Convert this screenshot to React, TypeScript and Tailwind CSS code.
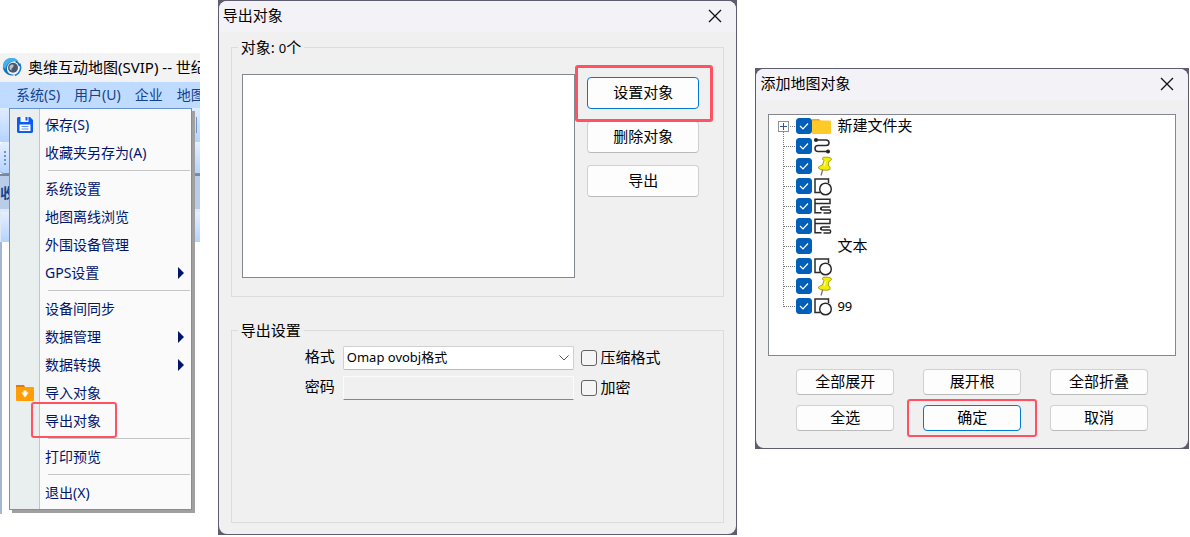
import React from "react";

const uiFont = "font-['Noto_Sans','Noto_Sans_CJK_SC',sans-serif]";

interface MenuEntry {
  label?: string;
  icon?: "save" | "import";
  submenu?: boolean;
  marked?: boolean;
}

// An entry without a label is a separator
const menuEntries: MenuEntry[] = [
  { label: "保存(S)", icon: "save" },
  { label: "收藏夹另存为(A)" },
  {},
  { label: "系统设置" },
  { label: "地图离线浏览" },
  { label: "外围设备管理" },
  { label: "GPS设置", submenu: true },
  {},
  { label: "设备间同步" },
  { label: "数据管理", submenu: true },
  { label: "数据转换", submenu: true },
  { label: "导入对象", icon: "import" },
  { label: "导出对象", marked: true },
  {},
  { label: "打印预览" },
  {},
  { label: "退出(X)" },
];

type NodeIcon = "folder" | "track" | "pin" | "shape" | "layer" | "none";

const treeNodes: { icon: NodeIcon; label: string }[] = [
  { icon: "folder", label: "新建文件夹" },
  { icon: "track", label: "" },
  { icon: "pin", label: "" },
  { icon: "shape", label: "" },
  { icon: "layer", label: "" },
  { icon: "layer", label: "" },
  { icon: "none", label: "文本" },
  { icon: "shape", label: "" },
  { icon: "pin", label: "" },
  { icon: "shape", label: "99" },
];

function Logo() {
  return (
    <svg viewBox="0 0 20 20" className="h-5 w-5 shrink-0" fill="none">
      <path d="M1 10A9 8.500 0 0 1 16.500 3.500C11 1.500 5.500 5 5 10S9 17.500 14 16.500A9 8.800 0 0 1 1 10Z" fill="#1373c4" />
      <path d="M1 9A8.500 8.500 0 0 1 16.500 3.500C10 1.500 4.500 5 3.500 11Z" fill="#43b1ea" />
      <circle cx="11" cy="9.800" r="5" fill="#4a5a6c" />
      <path d="M7.500 8.500C9 6 12 6 11.500 8S9 10 9.500 12.500C8 12 7 10.500 7.500 8.500Z" fill="#b4c4d0" />
      <path d="M17.500 5.500C20 10 18 15.500 13 17.500" stroke="#1880cf" strokeWidth="1.600" />
      <path d="M13.500 3.500C15.500 4 17 5.500 17.500 8" stroke="#1c5f9c" strokeWidth="1.300" />
    </svg>
  );
}

function SaveIcon() {
  return (
    <svg viewBox="0 0 16 16" className="h-4 w-4">
      <path d="M1 0H13L16 3V15L15 16H1L0 15V1Z" fill="#0d5bf0" />
      <path d="M3.500 0H11.500V5H3.500Z" fill="#f4f7fb" />
      <path d="M8.500 0H10.500V3.500H8.500Z" fill="#0d5bf0" />
      <path d="M2.500 7.500H13.500V14H2.500Z" fill="#fff" />
      <path d="M4.500 9.500H11.500M4.500 12H11.500" stroke="#5d94f5" />
    </svg>
  );
}

function ImportIcon() {
  return (
    <svg viewBox="0 0 18 16" className="h-4 w-[18px]">
      <path d="M0 0H8L9 2H17V5H0Z" fill="#e8780c" />
      <rect y="2" width="18" height="14" rx="1" fill="#ff9f05" />
      <path d="M7.500 5.500H10.500V7.500H12.500L9 12.500L5.500 7.500H7.500Z" fill="#fff" />
    </svg>
  );
}

function TreeIcon({ icon }: { icon: NodeIcon }) {
  return (
    <svg
      viewBox="0 0 20 20"
      className="h-5 w-5 shrink-0 overflow-visible"
      fill="none"
      stroke="#2b2b2b"
      strokeWidth="1.500"
    >
      {icon === "folder" && (
        <g stroke="none">
          <path d="M0 4C0 3.300 .5 3 1 3H7L8.500 4.500V8H0Z" fill="#ff9d1c" />
          <rect y="4.500" width="19" height="13.500" rx="1" fill="#ffca28" />
        </g>
      )}
      {icon === "track" && (
        <g>
          <path d="M4 4H14C18 4 18 9.500 14 9.500H6C2 9.500 2 15.500 6 15.500H16" />
          <circle cx="4" cy="4" r="1.300" fill="#111" />
          <circle cx="16" cy="15.500" r="1.300" fill="#111" />
        </g>
      )}
      {icon === "pin" && (
        <g>
          <path d="M11 13L9 19.500" stroke="#777" strokeWidth="1.300" />
          <path
            d="M10.500 2C10.500 .5 19.500 1 19.500 3C19.500 4.500 18 5 17 5.200L16.200 9.500C18 10.500 18.500 12 18 13.200C17 14.800 7.500 14.500 6.500 12C6.300 10.500 8 9.500 10.300 9.200L12 4.600C11 4 10.300 3 10.500 2Z"
            fill="#f3ee00"
            stroke="#8d8a16"
            strokeWidth=".8"
          />
          <path d="M13.500 5L12.200 10" stroke="#fffcae" strokeWidth="1.200" />
        </g>
      )}
      {icon === "shape" && (
        <g>
          <path d="M8 16.500H3V3H16.500V7" />
          <circle cx="13.500" cy="13" r="5.800" fill="#fff" />
        </g>
      )}
      {icon === "layer" && (
        <path d="M3 17.500V3.200H18V7.500H3M3 16.800H9.500M8 13H10M18 11H11C8 11 8 14 11 14H17.500C19 14 19 17 17.500 17H11.500" />
      )}
    </svg>
  );
}

// Dotted connector in front of a tree row
function Branch({ first, last }: { first: boolean; last: boolean }) {
  return (
    <svg viewBox="0 0 19 20" className="h-5 w-[19px] shrink-0" fill="none" shapeRendering="crispEdges">
      <path
        d={last ? "M6.500 0V11" : first ? "M6.500 16V20" : "M6.500 0V20"}
        stroke="#777"
        strokeDasharray="1 1"
      />
      <path d={first ? "M13 10.500H19" : "M7 10.500H19"} stroke="#777" strokeDasharray="1 1" />
      {first && (
        <g>
          <rect x="1.500" y="5.500" width="10" height="10" stroke="#919191" fill="#fff" />
          <path d="M3 10.500H10M6.500 7V14" stroke="#2f55a4" />
        </g>
      )}
    </svg>
  );
}

function CloseButton() {
  return (
    <button type="button" aria-label="关闭" className="flex h-6 w-6 items-center justify-center">
      <svg viewBox="0 0 14 14" className="h-3.5 w-3.5" stroke="#111" strokeWidth="1.300">
        <path d="M1 1L13 13M13 1L1 13" />
      </svg>
    </button>
  );
}

// Red frame around the control to click
function Mark({ className }: { className: string }) {
  return (
    <span
      className={`pointer-events-none absolute rounded-[3px] border-2 border-[#ff5263] ${className}`}
    />
  );
}

function PushButton({
  children,
  primary = false,
  className,
}: {
  children: React.ReactNode;
  primary?: boolean;
  className: string;
}) {
  return (
    <button
      type="button"
      className={`block rounded-[4px] border bg-[#fdfdfd] pb-0.5 text-[15px] leading-5 ${
        primary ? "border-[#0078d4]" : "border-[#d0d0d0] border-b-[#bababa]"
      } ${className}`}
    >
      {children}
    </button>
  );
}

function MainWindow() {
  return (
    <section className="relative mt-[53px] h-[461px] min-w-0 text-sm">
      <div className="flex h-full flex-col overflow-hidden whitespace-nowrap">
        <header className="flex h-[29px] shrink-0 items-center gap-1.5 bg-[#f3f3f3] pl-0.5 text-[15px] text-black">
          <Logo />
          <span>奥维互动地图(SVIP) -- 世纪</span>
        </header>
        <nav className="flex h-[26px] shrink-0 items-center gap-3.5 bg-[#bfdbff] pl-4 text-[#15428b]">
          <button type="button" className="shrink-0">系统(S)</button>
          <button type="button" className="shrink-0">用户(U)</button>
          <button type="button" className="shrink-0">企业</button>
          <button type="button" className="shrink-0">地图</button>
        </nav>
        <div className="flex h-[34px] shrink-0 items-center justify-end bg-linear-to-b from-[#e0ecff] to-[#b5d3ff] pr-[3px]">
          <span className="h-4 border-l border-[#6f94cc]" />
        </div>
        <div className="flex h-8 shrink-0 items-center rounded-l border-b border-[#6f94cc] bg-linear-to-b from-[#e5efff] to-[#b5d3ff] pl-1">
          <span className="h-3.5 border-l-2 border-dotted border-[#6f94cc]" />
        </div>
        <div className="flex h-[35px] shrink-0 items-center border-t-2 border-[#7d8794] bg-[#b9cde8] font-bold text-[#15428b]">
          收藏夹
        </div>
        <div className="h-[33px] shrink-0 border-l border-t-3 border-[#dfe8f6] bg-linear-to-b from-[#e5efff] to-[#b5d3ff]" />
        <div className="flex-1 border-l-2 border-[#a3b7d3] bg-white" />
      </div>

      <ul
        role="menu"
        className="absolute left-[9px] right-2 top-[55px] border border-[#6593cf] bg-[linear-gradient(90deg,#e9eeee_29px,#c5c5c5_29px,#c5c5c5_30px,#fafafa_30px)] py-0.5 text-[#00156e] shadow-[3px_3px_0_#a0a0a0]"
      >
        {menuEntries.map((entry, i) =>
          entry.label ? (
            <li key={i} role="none" className="relative">
              <button type="button" role="menuitem" className="flex h-7 w-full items-center text-left">
                <span className="flex w-[30px] shrink-0 justify-center">
                  {entry.icon === "save" && <SaveIcon />}
                  {entry.icon === "import" && <ImportIcon />}
                </span>
                <span className="flex-1 pl-[5px]">{entry.label}</span>
                {entry.submenu && (
                  <svg viewBox="0 0 6 12" className="mr-[7px] h-3 w-1.5" fill="#00156e">
                    <path d="M0 0L6 6L0 12Z" />
                  </svg>
                )}
              </button>
              {entry.marked && <Mark className="-top-[5px] left-[21px] h-9 w-[86px]" />}
            </li>
          ) : (
            <li key={i} role="separator" className="ml-[38px] mr-px h-2 pt-[3px]">
              <span className="block h-px w-full bg-[#c5c5c5]" />
            </li>
          )
        )}
      </ul>
    </section>
  );
}

function Dialog({
  title,
  className,
  children,
}: {
  title: string;
  className: string;
  children: React.ReactNode;
}) {
  return (
    <section className={`min-w-0 self-start bg-[#5e5d70] p-px text-black ${className}`}>
      <div className="flex h-full flex-col overflow-hidden rounded-lg bg-[#f0f0f0]">
        <header className="flex h-[31px] shrink-0 items-center justify-between bg-[#f3f2f7] pb-0.5 pl-1 pr-[9px]">
          <h2 className="pb-px text-[15px] leading-5">{title}</h2>
          <CloseButton />
        </header>
        {children}
      </div>
    </section>
  );
}

function FormRow({
  label,
  id,
  check,
  checkId,
  children,
}: {
  label: string;
  id: string;
  check: string;
  checkId: string;
  children: React.ReactNode;
}) {
  return (
    <div className="flex h-6 items-center">
      <label htmlFor={id} className="w-[111px] shrink-0 pb-1 pr-2 text-right leading-5">
        {label}
      </label>
      {children}
      <input
        type="checkbox"
        id={checkId}
        className="ml-[7px] h-4 w-4 shrink-0 appearance-none rounded-[3px] border border-[#626262] bg-[#f5f5f5]"
      />
      <label htmlFor={checkId} className="w-[126px] shrink-0 pb-0.5 pl-[3px] leading-5">
        {check}
      </label>
    </div>
  );
}

function ExportDialog() {
  return (
    <Dialog title="导出对象" className="h-[535px]">
      <div className="flex flex-1 flex-col gap-[23px] px-3 pb-[11px] pt-[5px] text-[15px]">
        <fieldset className="border border-[#dcdcdc] pb-[18px] pl-2.5 pr-6">
          <legend className="-ml-1 px-[3px] leading-5">
            对象: <span className="text-[13px]">0</span>个
          </legend>
          <div className="flex gap-3 pt-4">
            <div className="h-[204px] flex-1 border border-[#828790] bg-white" />
            <div className="relative flex flex-col gap-3 pt-[3px]">
              <PushButton primary className="h-8 w-28">设置对象</PushButton>
              <PushButton className="h-8 w-28">删除对象</PushButton>
              <PushButton className="h-8 w-28">导出</PushButton>
              <Mark className="-left-3 -right-3.5 -top-[9px] h-[57px] border-[3px]" />
            </div>
          </div>
        </fieldset>

        <fieldset className="flex-1 border border-[#dcdcdc]">
          <legend className="ml-1.5 px-[3px] leading-5">导出设置</legend>
          <div className="flex flex-col gap-1.5 pt-1.5">
            <FormRow label="格式" id="format" check="压缩格式" checkId="compress">
              <div className="relative flex-1">
                <select
                  id="format"
                  className="block h-6 w-full appearance-none rounded-[2px] border border-[#d0d0d0] border-b-[#bababa] bg-white pl-[3px] text-[13px]"
                >
                  <option>Omap ovobj格式</option>
                </select>
                <svg
                  viewBox="0 0 10 6"
                  className="pointer-events-none absolute right-[5px] top-[9px] h-1.5 w-2.5"
                  fill="none"
                  stroke="#555"
                >
                  <path d="M.5 .5L5 5L9.500 .5" />
                </svg>
              </div>
            </FormRow>
            <FormRow label="密码" id="password" check="加密" checkId="encrypt">
              <input
                id="password"
                type="password"
                disabled
                className="h-6 min-w-0 flex-1 border border-[#fbfbfb] border-b-[#868686] bg-[#f0f0f0]"
              />
            </FormRow>
          </div>
        </fieldset>
      </div>
    </Dialog>
  );
}

function AddObjectDialog() {
  return (
    <Dialog title="添加地图对象" className="mt-[68px]">
      <div className="px-3 pb-[17px] pt-3.5 text-[15px]">
        <ul className="h-[242px] border border-[#828790] bg-white pl-2 pt-px">
          {treeNodes.map((node, i) => (
            <li key={i}>
              <label className="flex h-5 items-center">
                <Branch first={i === 0} last={i === treeNodes.length - 1} />
                <span className="grid h-4 w-4 shrink-0">
                  <input
                    type="checkbox"
                    defaultChecked
                    aria-label={node.label || node.icon}
                    className="peer col-start-1 row-start-1 h-4 w-4 appearance-none rounded-[3px] border border-[#626262] checked:border-[#005fb8] checked:bg-[#005fb8]"
                  />
                  <svg
                    viewBox="0 0 16 16"
                    className="pointer-events-none invisible col-start-1 row-start-1 h-4 w-4 peer-checked:visible"
                    fill="none"
                    stroke="#fff"
                    strokeWidth="1.200"
                  >
                    <path d="M4 8L7 11L12 5.500" />
                  </svg>
                </span>
                <TreeIcon icon={node.icon} />
                <span className={`pl-[5px] ${node.label === "99" ? "text-[13px] leading-5" : "pb-0.5 leading-5"}`}>
                  {node.label}
                </span>
              </label>
            </li>
          ))}
        </ul>
        <div className="grid grid-cols-3 gap-x-[29px] gap-y-2.5 px-7 pt-[13px]">
          <PushButton className="h-[26px]">全部展开</PushButton>
          <PushButton className="h-[26px]">展开根</PushButton>
          <PushButton className="h-[26px]">全部折叠</PushButton>
          <PushButton className="h-[26px]">全选</PushButton>
          <div className="relative">
            <PushButton primary className="h-[26px] w-full">确定</PushButton>
            <Mark className="-inset-x-4 -inset-y-1.5" />
          </div>
          <PushButton className="h-[26px]">取消</PushButton>
        </div>
      </div>
    </Dialog>
  );
}

export default function App() {
  return (
    <main
      className={`grid min-h-screen grid-cols-[200fr_520fr_434fr] gap-x-[18px] bg-white pr-px ${uiFont}`}
    >
      <MainWindow />
      <ExportDialog />
      <AddObjectDialog />
    </main>
  );
}
